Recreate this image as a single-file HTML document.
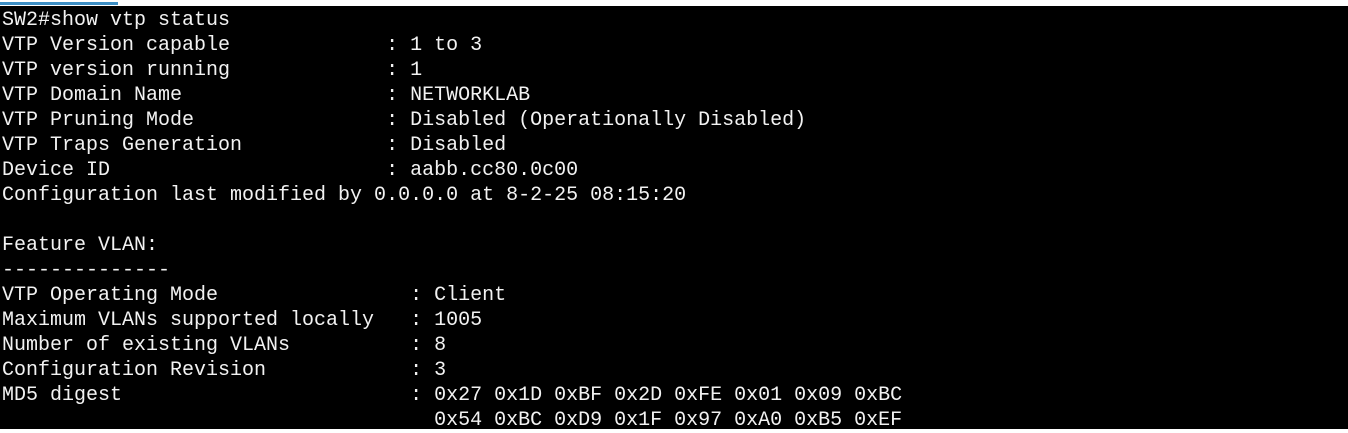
<!DOCTYPE html>
<html><head><meta charset="utf-8"><style>
html,body{margin:0;padding:0;width:1348px;height:429px;overflow:hidden;background:#fff}
.bar{position:absolute;left:0;top:0;width:1348px;height:6px;background:#fff}
.blue{position:absolute;left:0;top:2px;width:118px;height:3px;background:#3c8ec4}
.term{position:absolute;left:0;top:6px;width:1348px;height:423px;background:#000}
pre{margin:0;position:absolute;left:2px;top:8px;font-family:"Liberation Mono","Courier New",monospace;font-size:20px;line-height:25px;color:#f2f2f2;white-space:pre}
</style></head><body>
<div class="bar"></div><div class="blue"></div>
<div class="term"></div>
<pre>SW2#show vtp status
VTP Version capable             : 1 to 3
VTP version running             : 1
VTP Domain Name                 : NETWORKLAB
VTP Pruning Mode                : Disabled (Operationally Disabled)
VTP Traps Generation            : Disabled
Device ID                       : aabb.cc80.0c00
Configuration last modified by 0.0.0.0 at 8-2-25 08:15:20

Feature VLAN:
--------------
VTP Operating Mode                : Client
Maximum VLANs supported locally   : 1005
Number of existing VLANs          : 8
Configuration Revision            : 3
MD5 digest                        : 0x27 0x1D 0xBF 0x2D 0xFE 0x01 0x09 0xBC
                                    0x54 0xBC 0xD9 0x1F 0x97 0xA0 0xB5 0xEF</pre>
</body></html>
